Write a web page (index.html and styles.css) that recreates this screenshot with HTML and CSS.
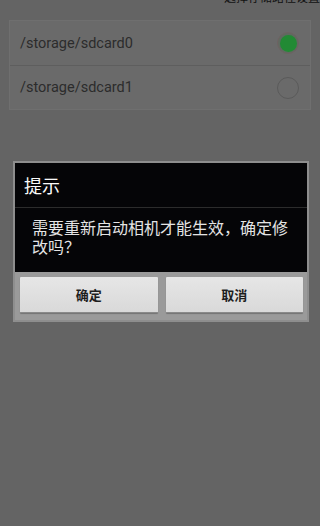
FILE: index.html
```html
<!DOCTYPE html>
<html lang="zh">
<head>
<meta charset="utf-8">
<link rel="stylesheet" href="styles.css">
</head>
<body>
<div class="screen">
  <div class="topbar"><span class="toptext">选择存储路径设置</span></div>
  <div class="card">
    <div class="row">
      <span class="path">/storage/sdcard0</span>
      <span class="radio checked"><span class="dot"></span></span>
    </div>
    <div class="row last">
      <span class="path">/storage/sdcard1</span>
      <span class="radio"></span>
    </div>
  </div>
  <div class="dialog">
    <div class="dlg-body">
      <div class="title">提示</div>
      <div class="msg">需要重新启动相机才能生效，确定修改吗？</div>
    </div>
    <div class="buttons">
      <button class="btn">确定</button>
      <button class="btn">取消</button>
    </div>
  </div>
</div>
</body>
</html>
```
FILE: styles.css
```css
html, body {
  margin: 0;
  padding: 0;
}
body {
  background: #646464;
  font-family: Roboto, "Noto Sans CJK SC", sans-serif;
}
.screen {
  width: 320px;
  height: 526px;
  overflow: hidden;
  background: #646464;
}
.topbar {
  height: 20px;
  overflow: hidden;
  display: flex;
  justify-content: flex-end;
}
.toptext {
  font-family: "Noto Sans CJK SC", sans-serif;
  font-size: 12px;
  line-height: 12px;
  color: #111;
  margin-top: -9px;
  height: 12px;
  white-space: nowrap;
}
.card {
  margin: 0 9px;
  background: #6a6a6a;
  border: 1px solid #6f6f6f;
  height: 88px;
}
.row {
  height: 45px;
  display: flex;
  align-items: center;
  justify-content: space-between;
  padding: 0 11px 0 10px;
  border-bottom: 1px solid #5e5e5e;
  box-sizing: border-box;
}
.row.last {
  border-bottom: none;
  height: 43px;
}
.path {
  font-size: 14.5px;
  color: #2c2c2c;
}
.radio {
  width: 22px;
  height: 22px;
  border-radius: 50%;
  border: 1px solid #5a5a5a;
  box-sizing: border-box;
  display: flex;
  align-items: center;
  justify-content: center;
}
.radio.checked {
  border-color: #6f6262;
  background: #5f6a60;
}
.dot {
  width: 17px;
  height: 17px;
  border-radius: 50%;
  background: #228a34;
}
.dialog {
  margin: 51px 0 0 13px;
  width: 296px;
  padding: 2px;
  box-sizing: border-box;
  background: #8e8e8e;
}
.dlg-body {
  background: #050507;
  height: 109px;
}
.title {
  height: 45px;
  box-sizing: border-box;
  border-bottom: 1px solid #2c2c2c;
  display: flex;
  align-items: center;
  padding-left: 9px;
  font-family: "Noto Sans CJK SC", sans-serif;
  font-size: 18px;
  color: #fafafa;
}
.msg {
  padding: 10px 14px 0 17px;
  font-family: "Noto Sans CJK SC", sans-serif;
  font-size: 16px;
  line-height: 19px;
  color: #e4e4e4;
}
.buttons {
  display: flex;
  gap: 8px;
  padding: 5px 4px 7px 5px;
  background: #9a9a9a;
}
.btn {
  flex: 1;
  height: 36px;
  margin: 0;
  border: none;
  border-bottom: 1px solid #8a8a8a;
  border-radius: 1px;
  background: linear-gradient(#e6e6e6, #d9d9d9);
  box-shadow: 0 1px 1px rgba(0,0,0,0.25);
  font-family: "Noto Sans CJK SC", sans-serif;
  font-size: 13px;
  font-weight: bold;
  color: #1e1e1e;
  padding: 0;
}
```
